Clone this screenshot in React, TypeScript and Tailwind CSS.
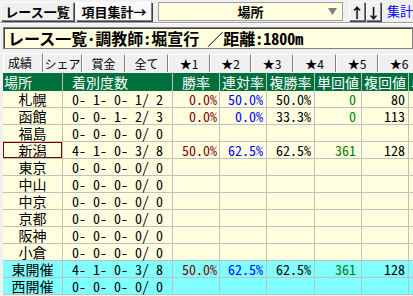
const rows = [
  { name: '札幌', rec: '0- 1- 0- 1/ 2', win: '0.0%', ren: '50.0%', fuku: '50.0%', tan: '0', fk: '80' },
  { name: '函館', rec: '0- 0- 1- 2/ 3', win: '0.0%', ren: '0.0%', fuku: '33.3%', tan: '0', fk: '113' },
  { name: '福島', rec: '0- 0- 0- 0/ 0' },
  { name: '新潟', rec: '4- 1- 0- 3/ 8', win: '50.0%', ren: '62.5%', fuku: '62.5%', tan: '361', fk: '128', selected: true },
  { name: '東京', rec: '0- 0- 0- 0/ 0' },
  { name: '中山', rec: '0- 0- 0- 0/ 0' },
  { name: '中京', rec: '0- 0- 0- 0/ 0' },
  { name: '京都', rec: '0- 0- 0- 0/ 0' },
  { name: '阪神', rec: '0- 0- 0- 0/ 0' },
  { name: '小倉', rec: '0- 0- 0- 0/ 0' },
  { name: '東開催', rec: '4- 1- 0- 3/ 8', win: '50.0%', ren: '62.5%', fuku: '62.5%', tan: '361', fk: '128', total: true },
  { name: '西開催', rec: '0- 0- 0- 0/ 0', total: true },
];

const tabs = ['成績', 'シェア', '賞金', '全て', '★1', '★2', '★3', '★4', '★5', '★6'];
const tabWidths = ['w-[40px]', 'w-[39px]', 'w-[43px]', 'w-[43px]', 'w-[42px]', 'w-[41px]', 'w-[42px]', 'w-[43px]', 'w-[42px]', 'w-[42px]'];

const gridCols = 'grid grid-cols-[60px_110px_47px_47px_48px_47px_47px_40px]';
const half = "[font-feature-settings:'hwid']";

function Raised({ className, children }: { className: string; children: React.ReactNode }) {
  return (
    <div
      className={`shrink-0 flex items-center justify-center border border-t-white border-l-white border-r-[#808080] border-b-[#808080] shadow-[1px_1px_0_#404040] ${className}`}
    >
      {children}
    </div>
  );
}

export default function App() {
  return (
    <div
      className="w-[413px] h-[296px] overflow-hidden bg-[#f0f0f0] text-black"
      style={{ fontFamily: '"Noto Sans CJK JP", sans-serif' }}
    >
      {/* toolbar */}
      <div className="flex h-[22px] items-start pt-[2px] pl-[1px] whitespace-nowrap overflow-hidden">
        <Raised className="w-[73px] h-[19px] bg-[#f0f0f0] text-[13px] font-bold leading-none">レース一覧</Raised>
        <Raised className="ml-[2px] w-[76px] h-[19px] bg-[#fafafa] text-[13px] font-bold leading-none">項目集計→</Raised>
        <div className="shrink-0 ml-[6px] w-[185px] h-[19px] bg-[#ffffe0] border border-[#a0a0a0] flex items-center">
          <span className="flex-1 text-center text-[13px] font-bold leading-none pl-[14px]">場所</span>
          <svg width="9" height="7" viewBox="0 0 9 7" className="mr-[5px]">
            <polygon points="0,0 9,0 4.5,7" fill="#808080" />
          </svg>
        </div>
        <Raised className="ml-[6px] w-[16px] h-[19px] bg-[#f0f0f0] text-[14px] font-bold leading-none">↑</Raised>
        <Raised className="ml-[1px] w-[15px] h-[19px] bg-[#f0f0f0] text-[14px] font-bold leading-none">↓</Raised>
        <span className="shrink-0 ml-[6px] mt-[1px] text-[13px] leading-[16px] text-[#0000ff]">集計表</span>
      </div>
      <div className="h-[2px] border-t border-[#a0a0a0] border-b border-b-white" />

      {/* title */}
      <div className="mt-[3px] ml-[3px] h-[22px] border border-[#808080] shadow-[inset_1px_1px_0_#404040] bg-[#ffffe0] flex items-center pl-[4px] text-[16px] font-bold leading-none whitespace-nowrap">
        レース一覧<span className={half}>･</span>調教師<span className={half}>:</span>堀宣行
        <span className="ml-[8px]">／距離</span>
        <span className={half}>:1800m</span>
      </div>

      {/* tabs */}
      <div className="mt-[4px] ml-[3px] flex h-[19px] whitespace-nowrap">
        {tabs.map((t, i) => (
          <div
            key={t}
            className={`${tabWidths[i]} shrink-0 flex items-center justify-center text-[12px] leading-none border-t border-l border-t-white border-l-white border-r border-r-[#808080] ${
              i === 0 ? 'bg-[#f0f0f0] pr-[6px]' : 'bg-[#f0f0f0] mt-[1px]'
            }`}
          >
            {t}
          </div>
        ))}
      </div>

      {/* table */}
      <div className="mt-[1px] pl-[3px] text-[14px] leading-none">
        <div className={`${gridCols} h-[18px] bg-[#00703c] text-white`}>
          <div className="flex items-center pl-[1px] border-r border-[#c0c0c0]">場所</div>
          <div className="flex items-center pl-[9px] border-r border-[#c0c0c0]">着別度数</div>
          <div className="flex items-center justify-center border-r border-[#c0c0c0]">勝率</div>
          <div className="flex items-center justify-center border-r border-[#c0c0c0]">連対率</div>
          <div className="flex items-center justify-center border-r border-[#c0c0c0]">複勝率</div>
          <div className="flex items-center justify-center border-r border-[#c0c0c0]">単回値</div>
          <div className="flex items-center justify-center border-r border-[#c0c0c0]">複回値</div>
          <div className="flex items-center pl-[2px]">単</div>
        </div>
        {rows.map((r) => (
          <div
            key={r.name}
            className={`${gridCols} h-[17px] ${r.total ? 'bg-[#80ffff]' : 'bg-[#ffffe0]'}`}
          >
            <div
              className={`flex items-center justify-center border-r border-b border-[#c0c0c0] ${
                r.selected ? 'shadow-[inset_0_0_0_1px_#800000]' : ''
              }`}
            >
              {r.name}
            </div>
            <div className={`flex items-center justify-center whitespace-pre border-r border-b border-[#c0c0c0] ${half}`}>
              {r.rec}
            </div>
            <div className={`flex items-center justify-end pr-[2px] border-r border-b border-[#c0c0c0] text-[#800000] ${half}`}>
              {r.win}
            </div>
            <div className={`flex items-center justify-end pr-[3px] border-r border-b border-[#c0c0c0] text-[#0000ff] ${half}`}>
              {r.ren}
            </div>
            <div className={`flex items-center justify-end pr-[3px] border-r border-b border-[#c0c0c0] ${half}`}>
              {r.fuku}
            </div>
            <div className={`flex items-center justify-end pr-[5px] border-r border-b border-[#c0c0c0] text-[#008000] ${half}`}>
              {r.tan}
            </div>
            <div className={`flex items-center justify-end pr-[3px] border-r border-b border-[#c0c0c0] ${half}`}>
              {r.fk}
            </div>
            <div className="border-b border-[#c0c0c0]" />
          </div>
        ))}
      </div>
    </div>
  );
}
